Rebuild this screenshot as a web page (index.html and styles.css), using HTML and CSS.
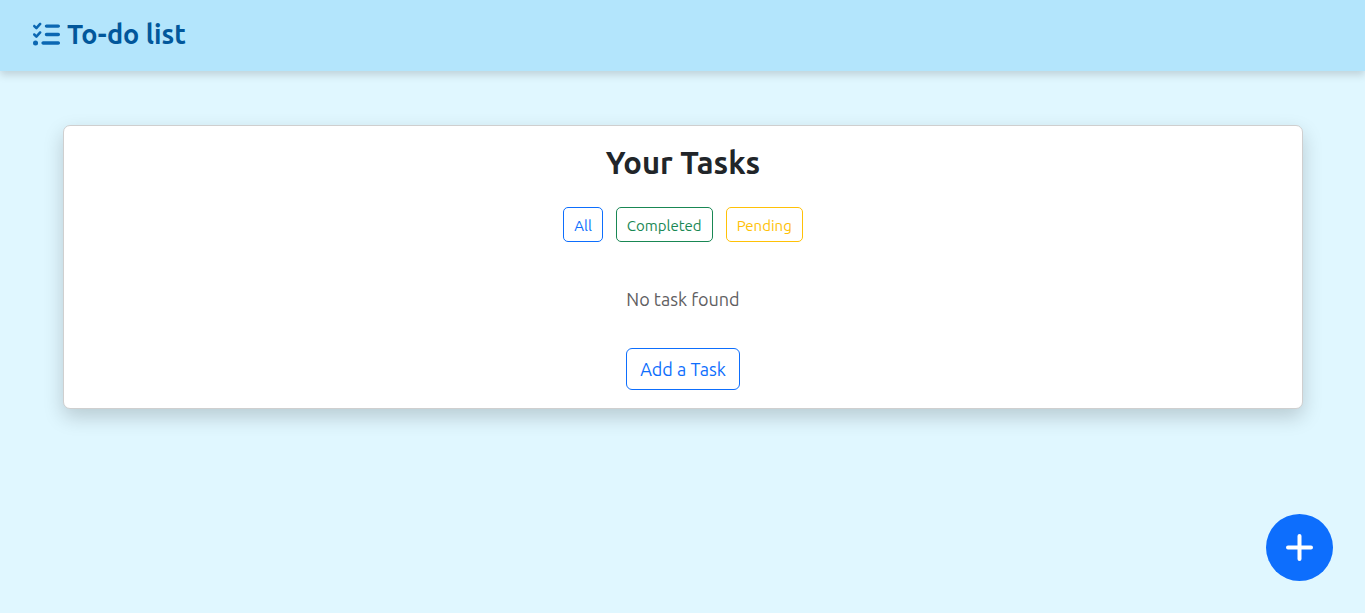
FILE: index.html
```html
<!DOCTYPE html>
<html lang="en">
<head>
<meta charset="utf-8">
<meta name="viewport" content="width=device-width, initial-scale=1">
<title>To-do list</title>
<link rel="stylesheet" href="styles.css">
</head>
<body>
<header class="navbar">
  <a class="brand" href="#">
    <svg class="brand-icon" viewBox="0 0 512 512" aria-hidden="true"><path fill="currentColor" d="M152.1 38.2c9.9 8.9 10.7 24 1.8 33.9l-72 80c-4.4 4.9-10.6 7.8-17.2 7.9s-12.9-2.4-17.6-7L7 113C-2.3 103.6-2.3 88.4 7 79s24.6-9.4 33.9 0l22.1 22.1 55.1-61.2c8.9-9.9 24-10.7 33.9-1.8zm0 160c9.9 8.9 10.7 24 1.8 33.9l-72 80c-4.4 4.9-10.6 7.8-17.2 7.9s-12.9-2.4-17.6-7L7 273c-9.4-9.4-9.4-24.6 0-33.9s24.6-9.4 33.9 0l22.1 22.1 55.1-61.2c8.9-9.9 24-10.7 33.9-1.8zM224 96c0-17.700 14.300-32 32-32H480c17.700 0 32 14.300 32 32s-14.300 32-32 32H256c-17.700 0-32-14.300-32-32zm0 160c0-17.700 14.300-32 32-32H480c17.700 0 32 14.300 32 32s-14.300 32-32 32H256c-17.700 0-32-14.300-32-32zM160 416c0-17.700 14.300-32 32-32H480c17.700 0 32 14.300 32 32s-14.300 32-32 32H192c-17.700 0-32-14.300-32-32zM48 368a48 48 0 1 1 0 96 48 48 0 1 1 0-96z"/></svg>
    <span>To-do list</span>
  </a>
</header>
<main class="content">
  <section class="card">
    <h2 class="card-title">Your Tasks</h2>
    <div class="filters">
      <button type="button" class="btn btn-small btn-primary">All</button>
      <button type="button" class="btn btn-small btn-success">Completed</button>
      <button type="button" class="btn btn-small btn-warning">Pending</button>
    </div>
    <p class="empty">No task found</p>
    <button type="button" class="btn btn-primary">Add a Task</button>
  </section>
</main>
<button type="button" class="fab" aria-label="Add a task">
  <svg class="fab-icon" viewBox="0 0 27 27" aria-hidden="true"><path d="M13.500 2v23M2 13.500h23" stroke="currentColor" stroke-width="4" stroke-linecap="round"/></svg>
</button>
</body>
</html>
```
FILE: styles.css
```css
* { box-sizing: border-box; }

body {
  margin: 0;
  min-height: 100vh;
  background: #e0f7ff;
  color: #212529;
  font-family: Ubuntu, "Noto Sans", sans-serif;
  font-size: 18px;
  line-height: 26px;
}

.navbar {
  display: flex;
  padding: 14px 33px 17px;
  background: #b3e5fc;
  box-shadow: 0 4px 8px rgba(0, 0, 0, 0.15);
}

.brand {
  display: flex;
  align-items: center;
  gap: 7px;
  color: #01579b;
  font-size: 27px;
  font-weight: 750;
  line-height: 40px;
  text-decoration: none;
}

.brand-icon {
  width: 27px;
  height: 27px;
  color: #0b67b2;
}

.content { padding: 54px 62px 54px 63px; }

.card {
  display: flex;
  flex-direction: column;
  align-items: center;
  padding: 17px 18px 18px;
  background: #fff;
  border: 1px solid #cfcfcf;
  border-radius: 7px;
  box-shadow: 0 8px 20px rgba(0, 0, 0, 0.18);
}

.card-title {
  margin: 0 0 24px;
  font-size: 31px;
  font-weight: 570;
  line-height: 40px;
}

.filters {
  display: flex;
  gap: 13px;
}

.btn {
  padding: 7px 13px;
  background: transparent;
  border: 1px solid currentColor;
  border-radius: 6px;
  font: inherit;
  cursor: pointer;
}

.btn-small {
  padding: 6px 10px 4px;
  border-radius: 5px;
  font-size: 15px;
  font-weight: 450;
  line-height: 23px;
}

.btn-primary { color: #0d6efd; }
.btn-success { color: #198754; }
.btn-warning { color: #ffc107; }

.empty {
  margin: 44px 0 36px;
  color: #5f6062;
}

.fab {
  position: fixed;
  right: 32px;
  bottom: 32px;
  display: grid;
  place-items: center;
  width: 67px;
  height: 67px;
  padding: 0;
  background: #0d6efd;
  color: #fff;
  border: 0;
  border-radius: 50%;
  cursor: pointer;
}

.fab-icon {
  width: 27px;
  height: 27px;
}
```
